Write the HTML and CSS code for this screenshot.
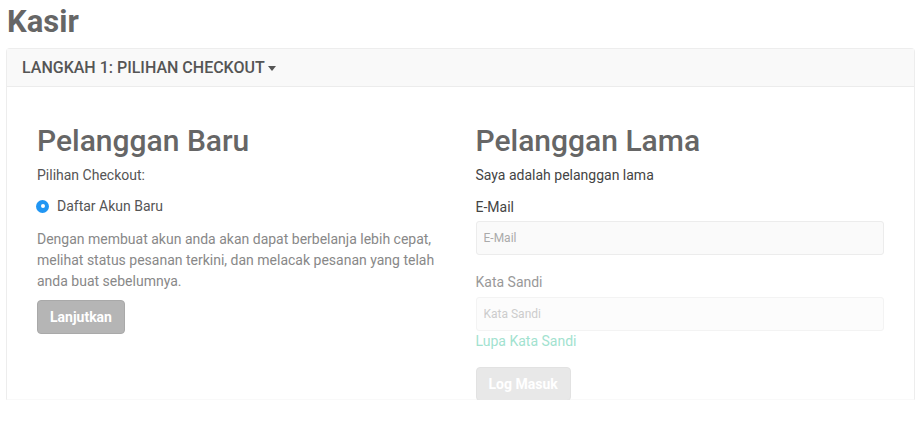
FILE: index.html
```html
<!DOCTYPE html>
<html lang="id">
<head>
    <meta charset="UTF-8">
    <meta name="viewport" content="width=device-width, initial-scale=1.0">
    <title>Kasir</title>
    <link rel="stylesheet" href="styles.css">
</head>
<body>
    <h1 class="page-title">Kasir</h1>

    <div class="panel">
        <div class="panel-heading">
            LANGKAH 1: PILIHAN CHECKOUT <span class="caret"></span>
        </div>
        <div class="panel-body">
            <div class="col">
                <h2>Pelanggan Baru</h2>
                <p class="lead-text">Pilihan Checkout:</p>
                <label class="radio">
                    <span class="radio-dot"></span>
                    Daftar Akun Baru
                </label>
                <p class="info">Dengan membuat akun anda akan dapat berbelanja lebih cepat, melihat status pesanan terkini, dan melacak pesanan yang telah anda buat sebelumnya.</p>
                <button class="btn btn-dark">Lanjutkan</button>
            </div>
            <div class="col">
                <h2>Pelanggan Lama</h2>
                <p class="lead-text dark">Saya adalah pelanggan lama</p>
                <label class="field-label">E-Mail</label>
                <input class="input" type="text" placeholder="E-Mail">
                <label class="field-label faded">Kata Sandi</label>
                <input class="input input-faded" type="password" placeholder="Kata Sandi">
                <a class="forgot" href="#">Lupa Kata Sandi</a>
                <button class="btn btn-light">Log Masuk</button>
            </div>
        </div>
    </div>
</body>
</html>
```

FILE: styles.css
```css
body {
    font-family: Roboto, "Liberation Sans", Arial, sans-serif;
    margin: 0;
    padding: 0 7px 0 6px;
    background: #fff;
    color: #555;
}
.page-title {
    font-size: 31px;
    font-weight: 700;
    line-height: 37px;
    color: #666;
    margin: 3px 0 8px 1px;
}
.panel {
    border: 1px solid #ededed;
    border-bottom-color: #f9f9f9;
    border-radius: 4px 4px 0 0;
    height: 350px;
}
.panel-heading {
    background: #f9f9f9;
    border-bottom: 1px solid #ececec;
    padding: 9px 15px 8px;
    font-size: 16px;
    line-height: 20px;
    font-weight: 500;
    color: #555;
}
.caret {
    display: inline-block;
    width: 0;
    height: 0;
    border-top: 5px solid #555;
    border-left: 4px solid transparent;
    border-right: 4px solid transparent;
    vertical-align: middle;
    margin-left: 0;
}
.panel-body {
    display: grid;
    grid-template-columns: 1fr 1fr;
    column-gap: 30px;
    padding: 15px 30px 0;
}
.col {
    display: flex;
    flex-direction: column;
    align-items: flex-start;
}
h2 {
    font-size: 30px;
    font-weight: 500;
    line-height: 33px;
    color: #666;
    margin: 22px 0 8px;
}
.lead-text {
    font-size: 14px;
    line-height: 20px;
    color: #555;
    margin: 0 0 11px;
}
.lead-text.dark {
    color: #444;
    margin-bottom: 12px;
}
.radio {
    display: flex;
    align-items: center;
    font-size: 14px;
    line-height: 20px;
    color: #555;
    margin-bottom: 13px;
}
.radio-dot {
    width: 13px;
    height: 13px;
    border-radius: 50%;
    background: #2196f3;
    margin: 0 8px 0 -1px;
    display: flex;
    align-items: center;
    justify-content: center;
}
.radio-dot::after {
    content: "";
    width: 4px;
    height: 4px;
    border-radius: 50%;
    background: #fff;
}
.info {
    font-size: 14px;
    line-height: 21px;
    color: #888;
    margin: 0 0 8px;
}
.btn {
    font-family: inherit;
    font-size: 14px;
    font-weight: 700;
    color: #fff;
    height: 34px;
    padding: 0 12px;
    border-radius: 4px;
}
.btn-dark {
    background: #b5b5b5;
    border: 1px solid #a9a9a9;
}
.btn-light {
    background: #e8e8e8;
    border: 1px solid #e2e2e2;
    margin-top: 16px;
}
.field-label {
    font-size: 14px;
    line-height: 20px;
    color: #444;
    margin-bottom: 4px;
}
.field-label.faded {
    color: #999;
    margin-top: 17px;
    margin-bottom: 5px;
}
.input {
    box-sizing: border-box;
    width: 100%;
    height: 34px;
    border: 1px solid #ececec;
    border-radius: 3px;
    background: #fafafa;
    padding: 0 7px;
    font-family: inherit;
    font-size: 12px;
}
.input::placeholder {
    color: #aaa;
}
.input-faded {
    border-color: #f3f3f3;
    background: #fcfcfc;
}
.input-faded::placeholder {
    color: #ccc;
}
.forgot {
    font-size: 14px;
    line-height: 20px;
    color: #a2e2cf;
    text-decoration: none;
}
```
